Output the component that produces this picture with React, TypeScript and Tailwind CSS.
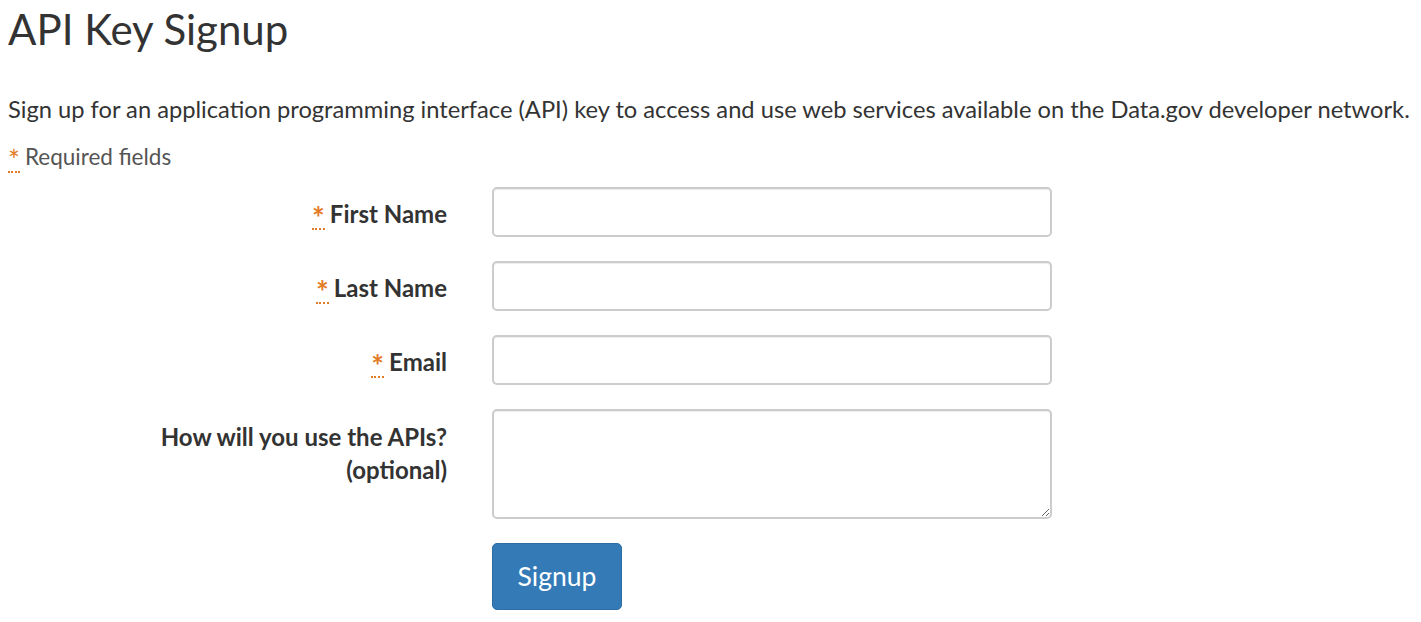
import { useState } from "react";

function Req() {
  return (
    <abbr
      title="required"
      className="relative top-[6px] inline-block text-[1.25em] leading-[0.7] text-[#e37b26] no-underline border-b-2 border-dotted border-[#e37b26] cursor-help mr-[5px]"
    >
      *
    </abbr>
  );
}

export default function App() {
  const [form, setForm] = useState({ first: "", last: "", email: "", use: "" });

  const inputCls =
    "w-[560px] h-[50px] px-3 border-2 border-[#ccc] rounded-[5px] bg-white text-[22px] text-[#555] shadow-[inset_0_1px_1px_rgba(0,0,0,0.075)] focus:outline-none focus:border-[#66afe9]";

  const fields: { key: "first" | "last" | "email"; label: string; type: string }[] = [
    { key: "first", label: "First Name", type: "text" },
    { key: "last", label: "Last Name", type: "text" },
    { key: "email", label: "Email", type: "email" },
  ];

  return (
    <div className="min-h-screen bg-white px-2 text-[#333] font-['Lato','Open_Sans',sans-serif]">
      <h1 className="text-[42px] leading-none pt-[8px] font-normal">API Key Signup</h1>

      <p className="mt-[43px] text-[23.7px] leading-[32px]">
        Sign up for an application programming interface (API) key to access and use web services available on the Data.gov developer network.
      </p>

      <p className="mt-[17px] text-[22.5px] leading-[30px] text-[#555]">
        <Req />
        Required fields
      </p>

      <form className="mt-[15px] flex flex-col gap-[24px]" onSubmit={(e) => e.preventDefault()}>
        {fields.map((f) => (
          <div key={f.key} className="flex items-center gap-[45px]">
            <label className="w-[439px] pt-[4px] text-right text-[24px] font-bold">
              <Req />
              {f.label}
            </label>
            <input
              type={f.type}
              value={form[f.key]}
              onChange={(e) => setForm((s) => ({ ...s, [f.key]: e.target.value }))}
              className={inputCls}
            />
          </div>
        ))}

        <div className="flex items-start gap-[45px]">
          <label className="w-[439px] text-right text-[24px] font-bold leading-[33px] pt-[11px]">
            How will you use the APIs?
            <br />
            (optional)
          </label>
          <textarea
            value={form.use}
            onChange={(e) => setForm((s) => ({ ...s, use: e.target.value }))}
            className="w-[560px] h-[110px] px-3 py-2 border-2 border-[#ccc] rounded-[5px] bg-white text-[22px] text-[#555] shadow-[inset_0_1px_1px_rgba(0,0,0,0.075)] focus:outline-none"
          />
        </div>

        <div className="flex gap-[45px]">
          <div className="w-[439px]" />
          <button
            type="submit"
            className="w-[130px] h-[67px] bg-[#337ab7] border border-[#2e6da4] rounded-[5px] text-white text-[26.5px]"
          >
            Signup
          </button>
        </div>
      </form>
    </div>
  );
}
